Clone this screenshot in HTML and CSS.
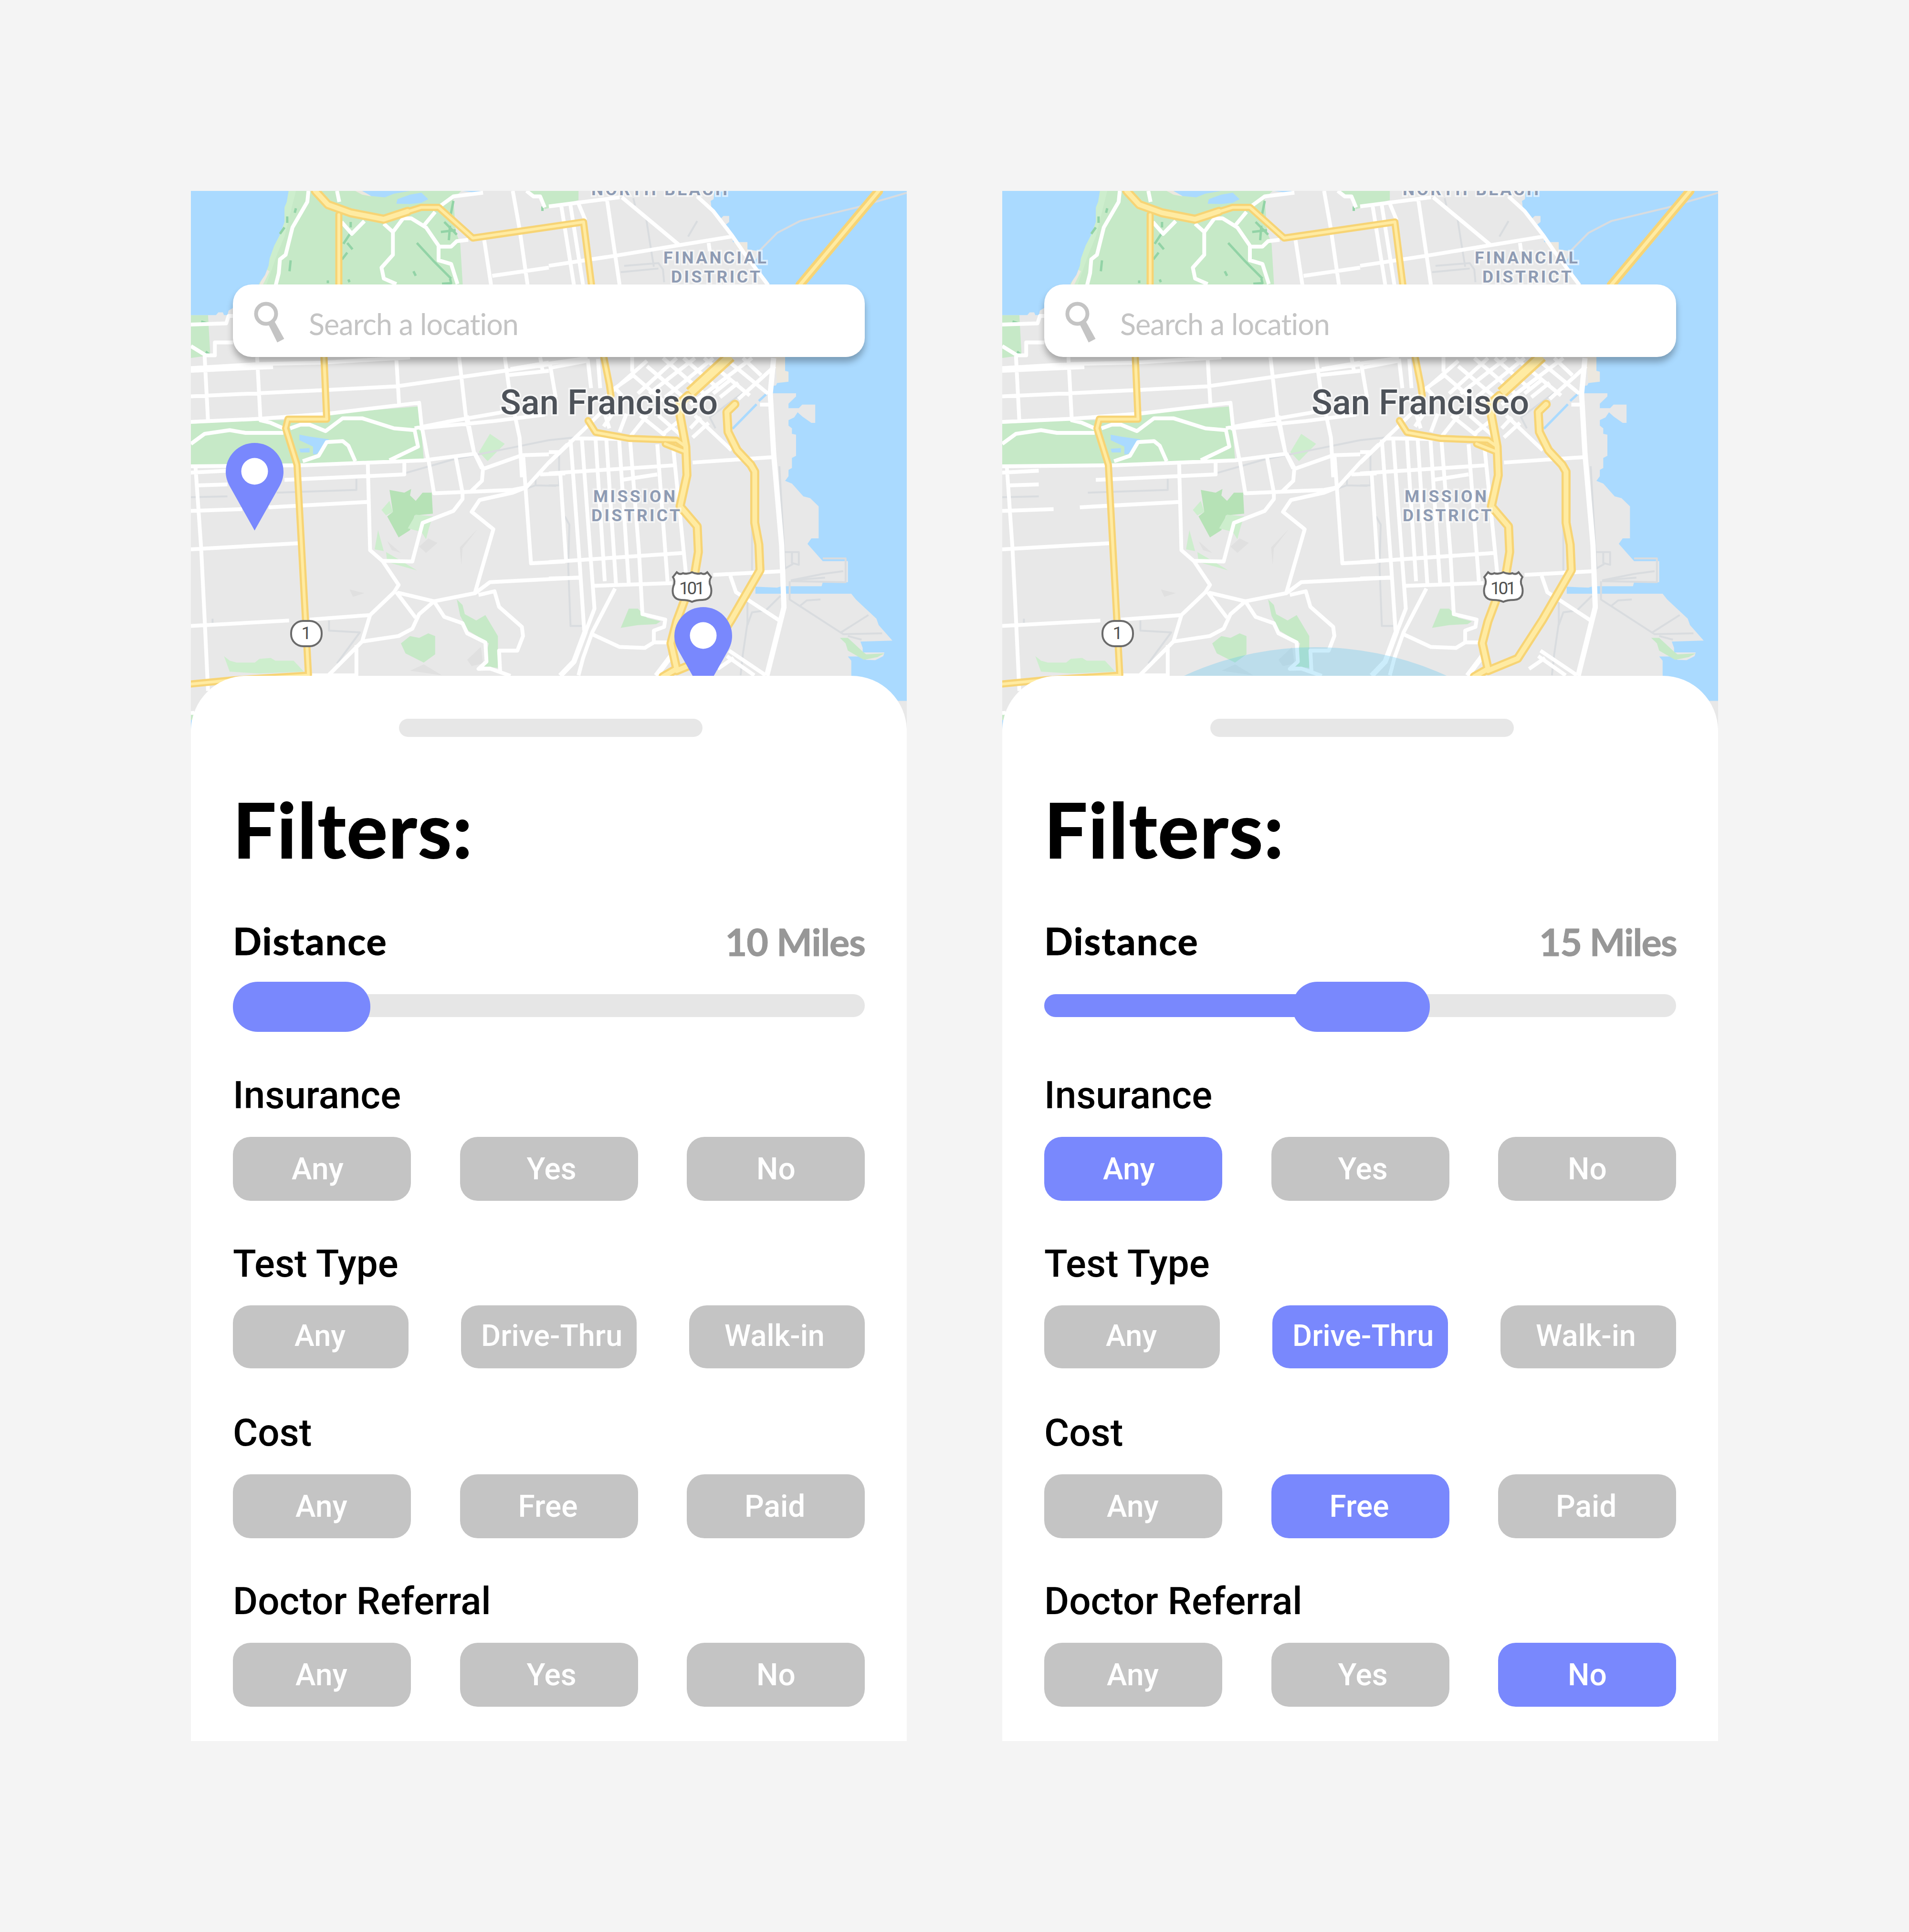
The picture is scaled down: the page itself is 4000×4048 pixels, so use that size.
FILE: index.html
```html
<!DOCTYPE html>
<html lang="en">
<head>
<meta charset="utf-8">
<title>Testing site filters</title>
<link rel="stylesheet" href="styles.css">
</head>
<body>
<svg class="defs" width="0" height="0" aria-hidden="true">
  <defs>
    <symbol id="pin" viewBox="0 0 121 184">
      <path class="pin-body" d="M60.500 183.500L8.500 91C3 81 0 71 0 60.500A60.500 60.500 0 0 1 121 60.500C121 71 118 81 112.500 91Z"/>
      <circle class="pin-hole" cx="60.500" cy="59.500" r="28"/>
    </symbol>
    <symbol id="search" viewBox="0 0 66 88">
      <circle class="lens" cx="25.500" cy="25.500" r="21"/>
      <path class="lens-grip" d="M30 47L43 41 63.500 78 49 85.500Z"/>
    </symbol>
    <symbol id="city-map" viewBox="0 0 1500 1156">
      <rect class="land" width="1500" height="1156"/>

      <!-- parks and water -->
      <g transform="scale(.4783 .38265)">
        <path class="park" d="M425 0H1185L1150 40 1160 220 1180 290 1195 600H150L300 515ZM1480 0L1530 40 1550 100 1698 50V0ZM0 680H75L85 900 0 915ZM0 1275L250 1255 480 1255 600 1220 1000 1180 1005 1250 1020 1470 700 1485 0 1505Z"/>
        <path class="park-light" d="M1310 1330L1375 1385 1300 1480 1262 1430ZM425 0H460L410 250 380 340 330 515H290L365 300 410 90Z"/>
        <path class="sand" d="M720 0L750 20 790 30 780 18 750 0ZM300 515L330 430 345 440 315 515Z"/>
        <path class="water" d="M0 0H428L420 60 410 90V170L390 240 365 300 345 370 340 410 325 460 300 505 290 560 185 640 165 655 160 680 145 680 140 665 120 665 110 680H0ZM750 0L790 28 850 35 890 15 960 0ZM900 70L905 45 960 20 1010 10 1040 45 1010 65 960 72ZM1190 0L1250 10 1270 0ZM475 1335L520 1345 605 1360 585 1400 550 1442H535V1400L475 1365ZM475 1412L520 1408V1432H480Z"/>
        <path class="trees" d="M460 95L455 120M422 140V175M410 200L390 235M405 350L415 362M437 380L432 440M700 170V200M697 235L668 290M685 285L708 320M685 338L662 375M990 285L1060 380 1140 480M1150 55L1135 150M1110 170L1165 240M1095 225L1160 215M1135 190L1130 270M975 440L985 465M600 490V505M690 485L695 500M1100 508L1140 505 1135 480M45 715L70 725M65 880L80 895M1540 85V110"/>
      </g>
      <g transform="translate(750 0) scale(.4783 .38265)">
        <path class="sand" d="M810 282H870V335H840ZM990 905H1040V985L1055 990V1045L1000 1060Z"/>
        <path class="water" d="M725 0L722 45 709 55 712 90 735 130 750 155 765 137H790V170L775 185 790 205 790 230 806 240V280H870V320L920 330 910 370 890 400 935 460 950 480 970 515 1000 600 1035 910V985L1050 990V1045L1000 1052 995 1065 970 1070V1108H1083V1125L1050 1165V1190H1095L1110 1170H1167V1270H1150L1110 1235 1090 1212 1075 1240 1050 1255 1050 1285 1065 1300V1330L1083 1335V1450H1570V0Z"/>
        <path class="canal" d="M955 1110L920 1150M910 1168L805 1302"/>
      </g>
      <g transform="translate(0 550) scale(.4783 .38265)">
        <path class="park-deep" d="M870 200L935 215 965 195 960 230 985 260 1015 215H1055L1060 330 980 340 960 420 910 460 860 345 885 320Z"/>
        <path class="park-light" d="M835 310L870 260 885 320 855 340ZM985 335L1060 345 1045 400 1030 470 1010 430 950 410ZM820 420L845 535 805 525ZM855 540L910 580 990 640 860 595ZM145 1110L170 1135 200 1145H280L300 1125 350 1120 370 1135H450L495 1195 300 1205 170 1195Z"/>
        <path class="park" d="M920 1040L960 1000 1000 1010 1040 985 1070 1000V1100L1020 1145 940 1095ZM1165 800L1190 830 1200 880 1250 915 1290 885 1345 1000V1175L1280 1165 1305 1040 1215 970 1180 890ZM0 1430H20V1460H0Z"/>
        <path class="water" d="M0 1460H20V1568H0Z"/>
        <path class="relief" d="M860 480L920 545 880 530ZM1000 510L1040 465 1080 490 1030 545ZM1255 415L1190 520 1185 610 1178 515ZM695 745L760 765 710 785ZM960 1190L1020 1155 1100 1215ZM1210 1130L1270 1060 1280 1150 1230 1165Z"/>
      </g>
      <g transform="translate(750 550) scale(.4783 .38265)">
        <path class="water" d="M1083 -20V13L1065 25V80L1050 90V125L1035 150 1065 165 1115 235 1145 245 1182 290V465H1150L1133 495 1200 590H1310V705H1200L1195 727H1020L1000 735 905 730V768H1325L1345 800 1435 905 1445 940 1505 1025 1365 1030 1375 1065V1090H1470L1465 1110 1430 1132 1390 1130 1360 1112H1310L1325 1135V1355H1570V-20Z"/>
        <path class="park" d="M350 850H390L430 900 490 920 470 935 390 940 315 955ZM1275 1010H1310L1375 1085 1390 1100 1470 1095 1440 1115 1380 1130 1310 1080 1300 1040Z"/>
      </g>

      <!-- rail lines and district outlines -->
      <g class="rail">
        <path transform="scale(.4783 .38265)" d="M940 1545L1150 1470 1350 1420 1568 1365 1680 1350"/>
        <path transform="translate(750 0) scale(.4783 .38265)" d="M925 325L1000 230 1100 165 1350 90 1568 10M425 140L445 300 460 415M330 410L480 395 500 430 505 500M315 445L480 425M370 40L378 80M650 165L610 250M850 1105L705 1240 730 1300"/>
        <path transform="translate(0 550) scale(.4783 .38265)" d="M0 240L160 235M375 215L725 200V140M605 915V970L740 980 640 1150M95 905V930M1475 190L1510 175 1600 178M1510 140V175"/>
        <path transform="translate(750 550) scale(.4783 .38265)" d="M1060 695L1200 660 1290 645M1060 695L1210 680M1055 700V800L1290 990 1460 985M1310 1000L1370 1020M1280 980L1400 885M1100 835L1130 805 1190 800M870 810V930L850 1100 840 1215M1015 780L950 860 890 870 870 940M70 345L90 390 85 620 95 945H145M890 230V640M1010 70L1035 630 1070 605M1035 540H1095V610L1065 600V545M1200 575H1300V705L1060 700M0 175H45V0"/>
      </g>

      <!-- streets -->
      <g class="street">
        <path transform="scale(.4783 .38265)" d="M515 0L510 60 445 200 415 350 390 375 385 450 372 515M640 0L650 60M660 170L705 235 760 165M845 180L885 225V350L835 420 845 480 900 510M885 225L930 150H965L1030 200 1085 300V380L1140 400 1168 510M1020 190L1070 115M1085 305H1140L1165 275 1215 268M1095 80L1150 30 1280 10M1410 0L1440 210 1475 515M1285 270L1315 515M1320 465L1568 420M1470 0L1500 30H1530L1550 90M0 732L155 725 165 685H190M0 850L65 900H105V830H185M60 900L75 1260M290 910L305 1260M900 920L912 1170M1175 910L1205 1240 1240 1430 1275 1520M1375 910L1395 1090 1440 1350 1450 1568M0 985L360 965M0 970L300 948 580 940 960 912M0 1125L600 1090 900 1070 1180 1020 1568 950M1380 1010L1568 985M1400 975L1568 940M1530 910L1540 980M0 1265L300 1248 600 1220 1000 1160 1010 1280 1040 1480M0 1385L60 1330 170 1310 240 1325H405M300 1255L350 1270 405 1300M435 1300L480 1280H520L590 1315 665 1245H750L890 1300 980 1310 995 1400 870 1475M980 1300L1120 1265 1350 1215 1400 1200M1000 1300L1330 1260 1550 1225M490 1480L560 1450 595 1375 665 1370 690 1395 720 1480M0 1508L500 1502 1020 1475 1240 1440M1210 1230L1240 1430"/>
        <path transform="translate(750 0) scale(.4783 .38265)" d="M0 85L310 35M320 35L570 295M650 30L720 110 800 240M0 410L290 355 800 250M800 240L850 330 960 515M55 85L110 515M95 80L150 515M130 70L160 160M255 50L310 515M700 285L705 330M0 970L170 930M5 950L30 1130M0 945L170 915M170 920L185 1080M215 920L225 1080M365 910V990M230 1150L430 930M320 1120L290 1080 370 1010M370 1010L500 1150M430 960L590 1130M500 915L680 1110M590 915L740 1080M680 915L880 1120M770 915L960 1110M850 915L930 1010M390 1110L560 915M440 1110L640 915M510 1130L720 915M620 1170L890 915M720 1110L800 1030M750 1130L830 1050M830 1140L990 960M400 1230L510 1340M480 1230L590 1350M640 1230L800 1420M430 1230L360 1340M630 1350L700 1270M500 1330L590 1240M620 1300L665 1240M240 1200L265 1300M290 1200L240 1290M340 1220L310 1320M925 1170H970M0 1490L150 1310 240 1200M110 1355L590 1362M0 1430H50"/>
        <path transform="translate(0 550) scale(.4783 .38265)" d="M0 105L160 95M20 70L45 520 60 900 75 1300M30 175L160 170M410 145L935 115V50M775 60L785 530 840 590 910 720 890 760 785 885 750 1030 600 1218M0 315L225 305M340 295L785 265M0 525L470 492M0 945L430 915M520 910L785 885M1040 30L1065 218 1190 212 1410 200 1470 185 1568 50 1650 -50M1160 20L1190 215V250L1150 315 1015 380 970 592 840 588M1245 0L1280 80 1275 150 1225 210M1280 85L1450 10 1568 5M1455 0L1490 602 1640 592M1470 185L1410 215 1265 255 1230 320 1325 415 1245 760M1530 115L1640 110M905 762L1065 810 1245 765 1310 705 1700 680M900 760L985 900M750 1030L910 1000 970 960 1000 880 1065 810 1110 895 1190 930 1210 985 1290 1035 1295 1140 1260 1180 1310 1178 1400 1218M1260 775L1330 755 1350 840 1450 950 1455 1000 1430 1080H1350L1355 1200M725 1050V1218M520 1215H725M0 1422L15 1420"/>
        <path transform="translate(750 550) scale(.4783 .38265)" d="M0 110L550 65M630 50L985 20M50 110L75 580M95 -75L135 600 155 970M145 -75L185 600 200 850 160 980M205 -75L245 700M252 -75L295 730M308 -75L350 710M356 -75L395 540 410 880 510 910 505 950 460 970V1035M475 -50L520 700M545 -30L600 650M320 145L475 115M0 595L590 545M0 685L140 680M195 725L540 710M720 665L1025 645M795 670L820 760 870 800 1010 915M290 740L190 980 150 1120 130 1215M190 990L310 1060 420 1065 460 1035H530M790 1080L950 1215M780 1110L900 1215M740 1180L810 1120"/>
        <path class="street-wide" transform="translate(750 0) scale(.4783 .38265)" d="M985 915L970 1110 985 1440 1020 1940 1030 2280 955 2655M470 2655L540 2540M160 2410L110 2577 50 2655"/>
      </g>

      <!-- highways: casing below, fill above -->
      <g class="hwy-case">
        <path transform="scale(.4783 .38265)" d="M545 0L600 75 700 120 845 155 1010 90H1085L1235 258 1720 170 1755 515M648 130V515M583 910L595 1250H425L415 1300 465 1500 480 1840 515 2650M0 2700L180 2678 510 2652"/>
        <path class="wide" transform="scale(.4783 .38265)" d="M545 0L600 75 700 120 845 155 950 112"/>
        <path transform="translate(750 0) scale(.4783 .38265)" d="M240 905L265 1060 272 1120M172 1258L205 1322 350 1355 560 1365 600 1400M510 1385L590 1425"/>
        <path class="wide" transform="translate(750 0) scale(.4783 .38265)" d="M1445 0L1100 515M610 1120L575 1160V1230L600 1400 605 1557 575 1727 650 1837 655 1977 640 2090 560 2357 535 2477 560 2617 500 2660M560 2627L690 2560 800 2347 925 2077 920 1937 902 1817V1537L885 1500 825 1420 785 1320 780 1210 815 1168"/>
        <path class="xwide" transform="translate(750 0) scale(.4783 .38265)" d="M795 905L620 1105"/>
      </g>
      <g class="hwy-fill">
        <path transform="scale(.4783 .38265)" d="M545 0L600 75 700 120 845 155 1010 90H1085L1235 258 1720 170 1755 515M648 130V515M583 910L595 1250H425L415 1300 465 1500 480 1840 515 2650M0 2700L180 2678 510 2652"/>
        <path class="wide" transform="scale(.4783 .38265)" d="M545 0L600 75 700 120 845 155 950 112"/>
        <path transform="translate(750 0) scale(.4783 .38265)" d="M240 905L265 1060 272 1120M172 1258L205 1322 350 1355 560 1365 600 1400M510 1385L590 1425"/>
        <path class="bridge" transform="translate(750 0) scale(.4783 .38265)" d="M1445 0L1100 515"/>
        <path class="wide" transform="translate(750 0) scale(.4783 .38265)" d="M610 1120L575 1160V1230L600 1400 605 1557 575 1727 650 1837 655 1977 640 2090 560 2357 535 2477 560 2617 500 2660M560 2627L690 2560 800 2347 925 2077 920 1937 902 1817V1537L885 1500 825 1420 785 1320 780 1210 815 1168"/>
        <path class="xwide" transform="translate(750 0) scale(.4783 .38265)" d="M795 905L620 1105"/>
      </g>

      <!-- route shields -->
      <rect class="shield" x="210" y="901" width="64" height="53" rx="25"/>
      <text class="shield-text" x="242" y="939" text-anchor="middle">1</text>
      <path class="shield" d="M1018 799Q1024 805 1031 801Q1040 804 1050 799Q1060 804 1069 801Q1076 805 1082 799L1090 809Q1084 818 1089 828Q1092 838 1089 847Q1084 857 1072 857Q1058 857 1050 861Q1042 857 1028 857Q1016 857 1011 847Q1008 838 1011 828Q1016 818 1010 809Z"/>
      <text class="shield-text" x="1050" y="845" textLength="54" text-anchor="middle">101</text>

      <!-- place names -->
      <text class="city" x="648" y="468" textLength="456">San Francisco</text>
      <text class="district" x="839" y="9" textLength="285">NORTH BEACH</text>
      <text class="district" x="990" y="152" textLength="216">FINANCIAL</text>
      <text class="district" x="1006" y="192" textLength="187">DISTRICT</text>
      <text class="district" x="843" y="652" textLength="172">MISSION</text>
      <text class="district" x="839" y="692" textLength="186">DISTRICT</text>
    </symbol>
  </defs>
</svg>

<main class="board">
  <section class="phone">
    <div class="map">
      <svg class="map-art" viewBox="0 0 1500 1156"><use href="#city-map"/></svg>
      <svg class="pin pin-west"><use href="#pin"/></svg>
      <svg class="pin pin-south"><use href="#pin"/></svg>
      <div class="search">
        <svg class="search-icon"><use href="#search"/></svg>
        <span class="search-hint">Search a location</span>
      </div>
    </div>
    <div class="sheet">
      <div class="grabber"></div>
      <h1 class="title">Filters:</h1>
      <div class="distance">
        <h2 class="distance-name">Distance</h2>
        <span class="distance-value">10 Miles</span>
      </div>
      <div class="slider">
        <div class="track"></div>
        <div class="thumb"></div>
      </div>
      <div class="groups">
        <div class="group">
          <h2 class="label">Insurance</h2>
          <div class="options">
            <span class="option any-first">Any</span><span class="option yes">Yes</span><span class="option no">No</span>
          </div>
        </div>
        <div class="group">
          <h2 class="label">Test Type</h2>
          <div class="options compact">
            <span class="option any">Any</span><span class="option drive">Drive-Thru</span><span class="option walk">Walk-in</span>
          </div>
        </div>
        <div class="group">
          <h2 class="label">Cost</h2>
          <div class="options">
            <span class="option any">Any</span><span class="option free">Free</span><span class="option paid">Paid</span>
          </div>
        </div>
        <div class="group">
          <h2 class="label">Doctor Referral</h2>
          <div class="options">
            <span class="option any">Any</span><span class="option yes">Yes</span><span class="option no">No</span>
          </div>
        </div>
      </div>
    </div>
  </section>

  <section class="phone">
    <div class="map">
      <svg class="map-art" viewBox="0 0 1500 1156"><use href="#city-map"/><circle class="radius" cx="656" cy="1619" r="663"/></svg>
      <div class="search">
        <svg class="search-icon"><use href="#search"/></svg>
        <span class="search-hint">Search a location</span>
      </div>
    </div>
    <div class="sheet">
      <div class="grabber"></div>
      <h1 class="title">Filters:</h1>
      <div class="distance">
        <h2 class="distance-name">Distance</h2>
        <span class="distance-value fifteen">15 Miles</span>
      </div>
      <div class="slider">
        <div class="track"><div class="fill"></div></div>
        <div class="thumb thumb-mid"></div>
      </div>
      <div class="groups">
        <div class="group">
          <h2 class="label">Insurance</h2>
          <div class="options">
            <span class="option any-first selected">Any</span><span class="option yes">Yes</span><span class="option no">No</span>
          </div>
        </div>
        <div class="group">
          <h2 class="label">Test Type</h2>
          <div class="options compact">
            <span class="option any">Any</span><span class="option drive selected">Drive-Thru</span><span class="option walk">Walk-in</span>
          </div>
        </div>
        <div class="group">
          <h2 class="label">Cost</h2>
          <div class="options">
            <span class="option any">Any</span><span class="option free selected">Free</span><span class="option paid">Paid</span>
          </div>
        </div>
        <div class="group">
          <h2 class="label">Doctor Referral</h2>
          <div class="options">
            <span class="option any">Any</span><span class="option yes">Yes</span><span class="option no selected">No</span>
          </div>
        </div>
      </div>
    </div>
  </section>
</main>
</body>
</html>
```
FILE: styles.css
```css
* {
  box-sizing: border-box;
}

body {
  margin: 0;
  background: #f4f4f4;
  font-family: Roboto, sans-serif;
}

h1,
h2 {
  margin: 0;
}

.defs {
  display: block;
}

.board {
  display: flex;
  gap: 200px;
  width: 4000px;
  height: 4048px;
  padding: 400px;
}

.phone {
  display: flex;
  flex-direction: column;
  width: 1500px;
  height: 3248px;
  overflow: hidden;
  background: #fff;
}

/* Map */

.map {
  position: relative;
  flex: none;
  height: 1156px;
}

.map-art {
  display: block;
  width: 1500px;
  height: 1156px;
}

.land { fill: #e8e8e8; }
.park { fill: #c6e9c7; }
.park-light { fill: #cdeecd; }
.park-deep { fill: #b6e2b6; }
.sand { fill: #ece8df; }
.water { fill: #aadaff; }
.relief { fill: #e0e0e0; }

.trees,
.canal,
.rail path,
.street path,
.hwy-case path,
.hwy-fill path {
  fill: none;
  stroke-linejoin: round;
  vector-effect: non-scaling-stroke;
}

.trees { stroke: #92d3a6; stroke-width: 5; }
.canal { stroke: #aadaff; stroke-width: 5; }
.rail path { stroke: #d9dcdf; stroke-width: 4; }
.street path { stroke: #fff; stroke-width: 8; }
.street .street-wide { stroke-width: 11; }
.hwy-case path { stroke: #f7d475; stroke-width: 15; stroke-linecap: round; }
.hwy-fill path { stroke: #ffeba2; stroke-width: 6; stroke-linecap: round; }
.hwy-case .wide { stroke-width: 19; }
.hwy-fill .wide { stroke-width: 10; }
.hwy-fill .bridge { stroke-width: 7; }
.hwy-case .xwide { stroke-width: 26; stroke-linecap: butt; }
.hwy-fill .xwide { stroke-width: 16; stroke-linecap: butt; }

.shield {
  fill: #fff;
  stroke: #6a6a6a;
  stroke-width: 4;
}

.shield-text {
  font: 400 37px Roboto, sans-serif;
  fill: #505050;
}

.city {
  font: 500 72px Roboto, sans-serif;
  fill: #4d5259;
  stroke: rgba(255, 255, 255, .6);
  stroke-width: 7px;
  paint-order: stroke;
}

.district {
  font: 700 35.500px Roboto, sans-serif;
  fill: #8e9bb3;
  stroke: rgba(255, 255, 255, .6);
  stroke-width: 7px;
  paint-order: stroke;
}

.radius { fill: rgba(87, 194, 241, .3); }

.pin {
  position: absolute;
  width: 121px;
  height: 184px;
}

.pin-west { left: 73px; top: 528px; }
.pin-south { left: 1013px; top: 872px; }
.pin-body { fill: #7988fd; }
.pin-hole { fill: #fff; }

.search {
  position: absolute;
  left: 88px;
  top: 196px;
  display: flex;
  align-items: center;
  width: 1324px;
  height: 152px;
  padding-left: 44px;
  border-radius: 40px;
  background: #fff;
  box-shadow: 0 11px 14px rgba(0, 0, 0, .28);
}

.search-icon {
  width: 66px;
  height: 88px;
  margin-top: 8px;
}

.lens {
  fill: none;
  stroke: #c4c4c4;
  stroke-width: 8;
}

.lens-grip { fill: #c4c4c4; }

.search-hint {
  margin: 13px 0 0 49px;
  font: 400 61px/72px Lato, sans-serif;
  letter-spacing: -.9px;
  font-variant-ligatures: none;
  color: #c4c4c4;
}

/* Filter sheet */

.sheet {
  position: relative;
  flex: 1;
  margin-top: -140px;
  padding: 90px 88px 0;
  border-radius: 116px 116px 0 0;
  background: #fff;
}

.grabber {
  width: 636px;
  height: 38px;
  margin-left: 348px;
  border-radius: 19px;
  background: #e7e7e7;
}

.title {
  margin-top: 112px;
  font: 700 160px/160px Lato, sans-serif;
  letter-spacing: 2.200px;
  color: #000;
  -webkit-text-stroke: 2px #000;
}

.distance {
  display: flex;
  justify-content: space-between;
  margin-top: 115px;
  font: 700 79px/80px Lato, sans-serif;
}

.distance-name {
  font: inherit;
  letter-spacing: 2px;
  -webkit-text-stroke: 1px #000;
}

.distance-value {
  height: 80px;
  margin-right: -1px;
  padding-top: 2px;
  color: #979797;
  letter-spacing: -1px;
  -webkit-text-stroke: 1px #979797;
}

.distance-value.fifteen { letter-spacing: -1.700px; }

.slider {
  position: relative;
  height: 105px;
  margin-top: 46px;
  padding-top: 26px;
}

.track,
.fill {
  height: 48px;
  border-radius: 24px;
}

.track { background: #e6e6e6; }
.fill { width: 660px; background: #7988fd; }

.thumb {
  position: absolute;
  left: 0;
  top: 0;
  width: 288px;
  height: 105px;
  border-radius: 52px;
  background: #7988fd;
}

.thumb-mid { left: 520px; }

.groups {
  display: grid;
  grid-auto-rows: 353.400px;
  margin-top: 93px;
}

.label {
  font: 500 80px/80px Roboto, sans-serif;
}

.options {
  display: flex;
  justify-content: space-between;
  margin-top: 47px;
}

.option {
  width: 373px;
  height: 134px;
  border-radius: 37px;
  background: #c4c4c4;
  color: #fff;
  font: 500 64px/135px Roboto, sans-serif;
  white-space: nowrap;
}

.compact .option {
  width: 368px;
  height: 132px;
  font-size: 63px;
  line-height: 127px;
}

.option.selected { background: #7988fd; }

.any-first { padding-left: 123px; }
.any { padding-left: 131px; }
.compact .any { padding-left: 129px; }
.yes { padding-left: 140px; }
.no { padding-left: 146px; }
.drive { padding-left: 42px; }
.walk { padding-left: 74px; }
.free { padding-left: 122px; }
.paid { padding-left: 121px; }
```
